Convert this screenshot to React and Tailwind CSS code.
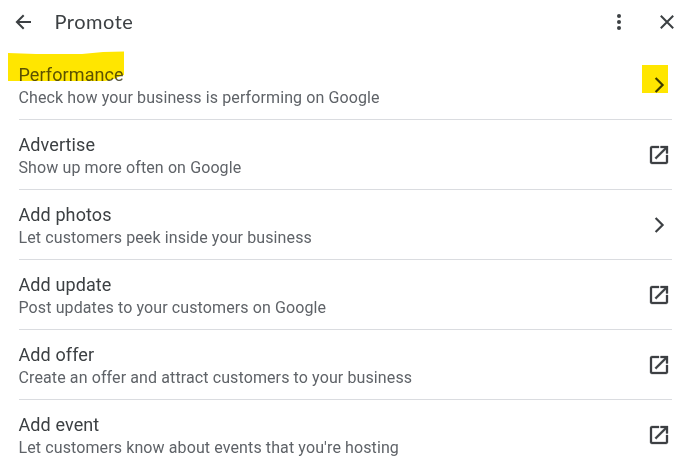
import React from "react";

const items = [
  {
    title: "Performance",
    text: "Check how your business is performing on Google",
    highlighted: true,
  },
  {
    title: "Advertise",
    text: "Show up more often on Google",
    external: true,
  },
  {
    title: "Add photos",
    text: "Let customers peek inside your business",
  },
  {
    title: "Add update",
    text: "Post updates to your customers on Google",
    external: true,
  },
  {
    title: "Add offer",
    text: "Create an offer and attract customers to your business",
    external: true,
  },
  {
    title: "Add event",
    text: "Let customers know about events that you're hosting",
    external: true,
  },
];

function BackIcon() {
  return (
    <svg className="w-6 h-6" viewBox="0 0 24 24" fill="none" stroke="currentColor" strokeWidth="2">
      <path d="M20 12H6.4M12.7 5.2L5.9 12L12.7 18.8" />
    </svg>
  );
}

function MoreIcon() {
  return (
    <svg className="w-6 h-6" viewBox="0 0 24 24" fill="currentColor">
      <circle cx="12" cy="6" r="2" />
      <circle cx="12" cy="12" r="2" />
      <circle cx="12" cy="18" r="2" />
    </svg>
  );
}

function CloseIcon() {
  return (
    <svg className="w-6 h-6" viewBox="0 0 24 24" fill="none" stroke="currentColor" strokeWidth="2">
      <path d="M5.8 5.8L18.2 18.2M18.2 5.8L5.8 18.2" />
    </svg>
  );
}

function ChevronIcon() {
  return (
    <svg className="w-6 h-6" viewBox="0 0 24 24" fill="none" stroke="currentColor" strokeWidth="2.2">
      <path d="M8.6 4.9L15.6 12L8.6 19.1" />
    </svg>
  );
}

function LaunchIcon() {
  return (
    <svg className="w-6 h-6" viewBox="0 0 24 24" fill="currentColor" stroke="currentColor" strokeWidth="0.3">
      <path d="M19 19H5V5h7V3H5c-1.11 0-2 .9-2 2v14c0 1.1.89 2 2 2h14c1.1 0 2-.9 2-2v-7h-2v7zM13.5 3v2h4.09l-9.83 9.83 1.41 1.41L19 6.41V10.5h2V3h-7.5z" />
    </svg>
  );
}

function Item({ title, text, external, highlighted }) {
  return (
    <li className="relative h-[70px] flex items-center justify-between border-b border-[#dadce0] last:border-transparent">
      <div className="pt-[3px]">
        <h2 className="text-[18px] leading-6 tracking-[0.1px] text-[#3c4043]">{title}</h2>
        <p className="text-[16px] leading-[22px] tracking-[0.11px] text-[#5f6368]">{text}</p>
      </div>
      <button className="mr-[1px] text-[#3c4043]">
        {external ? <LaunchIcon /> : <ChevronIcon />}
      </button>

      {/* Marker strokes */}
      {highlighted && (
        <>
          <svg
            className="absolute -left-[11px] top-[1px] w-[117px] h-[31px] mix-blend-screen"
            viewBox="0 0 117 31"
            fill="#2a2400"
          >
            <path d="M0 2L28 3H74L95 1L116 .5V30H0Z" />
          </svg>
          <svg
            className="absolute -left-[11px] top-[1px] w-[117px] h-[31px] mix-blend-multiply"
            viewBox="0 0 117 31"
            fill="#ffe600"
          >
            <path d="M0 2L28 3H74L95 1L116 .5V24C111 25 104 30 96 30H0Z" />
          </svg>
          <span className="absolute right-[4px] top-[15px] w-[26px] h-[28px] bg-[#ffe600] mix-blend-multiply" />
        </>
      )}
    </li>
  );
}

export default function App() {
  return (
    <div className="w-full h-[468px] overflow-hidden bg-white font-[Roboto,sans-serif]">
      <header className="h-[50px] flex items-center pl-[11px] pr-2 pb-[6px] text-[#3c4043]">
        <button>
          <BackIcon />
        </button>
        <h1 className="ml-[19.5px] pb-[2px] flex-1 font-[Lato,sans-serif] text-[20px] tracking-[0.5px]">
          Promote
        </h1>
        <button>
          <MoreIcon />
        </button>
        <button className="ml-6">
          <CloseIcon />
        </button>
      </header>
      <ul className="ml-[18.5px] mr-[15px]">
        {items.map((item) => (
          <Item key={item.title} {...item} />
        ))}
      </ul>
    </div>
  );
}
